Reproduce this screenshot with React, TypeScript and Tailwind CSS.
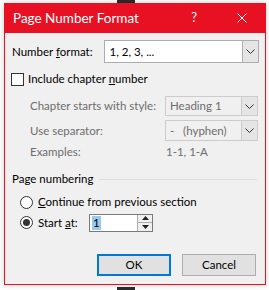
import React from 'react'

const font = { fontFamily: '"Segoe UI", Lato, "Noto Sans", sans-serif' }

function Chevron() {
  return (
    <svg width="9" height="5" viewBox="0 0 9 5" className="block">
      <path d="M0.5 0.5 L4.5 4.5 L8.5 0.5" fill="none" stroke="#333" strokeWidth="1" />
    </svg>
  )
}

function Select({ value, disabled, className }: { value: string; disabled?: boolean; className: string }) {
  return (
    <div
      className={
        'flex border ' +
        (disabled ? 'border-[#cccccc] bg-[#f0f0f0] text-[#6d6d6d] ' : 'border-[#adadad] bg-white text-black ') +
        className
      }
    >
      <div className="flex flex-1 items-center pl-[4px]">{value}</div>
      <div
        className={
          'flex w-[16px] items-center justify-center border-l ' +
          (disabled ? 'border-[#cccccc] bg-[#e5e5e5]' : 'border-[#adadad] bg-[#e5e5e5]')
        }
      >
        <Chevron />
      </div>
    </div>
  )
}

function Radio({ checked }: { checked?: boolean }) {
  return (
    <div className="flex h-[13px] w-[13px] items-center justify-center rounded-full border border-[#333] bg-white">
      {checked && <div className="h-[7px] w-[7px] rounded-full bg-[#333]" />}
    </div>
  )
}

export default function App() {
  return (
    <div className="flex h-[290px] w-[269px] flex-col bg-white text-[11.5px]" style={font}>
      <div className="ml-[117px] h-[3px] w-[18px] bg-[#2b2b2b]" />
      <div className="mx-[3px] ml-[4px] flex h-[282px] flex-col border border-t-0 border-[#e81123] bg-[#f0f0f0] shadow-[0_0_6px_rgba(0,0,0,0.2)]">
        {/* title bar */}
        <div className="-mx-px flex h-[30px] items-center bg-[#e81123] pl-[9px] text-white">
          <span className="text-[13.5px]">Page Number Format</span>
          <span className="ml-auto mr-[40px] text-[13px]">?</span>
          <svg width="10" height="10" viewBox="0 0 10 10" className="mr-[19px]">
            <path d="M0.5 0.5 L9.5 9.5 M9.5 0.5 L0.5 9.5" stroke="white" strokeWidth="1" />
          </svg>
        </div>

        <div className="flex flex-1 flex-col px-[6px]">
          {/* number format */}
          <div className="mt-[7px] flex h-[23px] items-center">
            <span className="w-[95px] pl-[1px]">
              Number <u>f</u>ormat:
            </span>
            <Select value="1, 2, 3, ..." className="h-[23px] w-[157px]" />
          </div>

          {/* include chapter */}
          <div className="mt-[9px] flex h-[14px] items-center">
            <div className="h-[13px] w-[13px] border border-[#333] bg-white" />
            <span className="ml-[4px]">
              Include chapter <u>n</u>umber
            </span>
          </div>

          <div className="mt-[10px] flex h-[20px] items-center text-[#6d6d6d]">
            <span className="w-[154px] pl-[19px]">Chapter starts with style:</span>
            <Select value="Heading 1" disabled className="h-[20px] w-[93px]" />
          </div>
          <div className="mt-[4px] flex h-[21px] items-center text-[#6d6d6d]">
            <span className="w-[154px] pl-[19px]">Use separator:</span>
            <Select value="-   (hyphen)" disabled className="h-[21px] w-[93px] whitespace-pre" />
          </div>
          <div className="mt-[3px] flex h-[16px] items-center text-[#6d6d6d]">
            <span className="w-[155px] pl-[19px]">Examples:</span>
            <span>1-1, 1-A</span>
          </div>

          {/* page numbering */}
          <div className="mt-[11px] flex h-[16px] items-center">
            <span className="pl-[1px]">Page numbering</span>
            <div className="ml-[6px] mr-[2px] h-px flex-1 bg-[#dcdcdc]" />
          </div>
          <div className="mt-[7px] flex h-[16px] items-center pl-[9px]">
            <Radio />
            <span className="ml-[5px]">
              <u>C</u>ontinue from previous section
            </span>
          </div>
          <div className="mt-[3px] flex h-[19px] items-center pl-[9px]">
            <Radio checked />
            <span className="ml-[5px] w-[51px]">
              Start <u>a</u>t:
            </span>
            <div className="flex h-[18px] w-[64px] border border-[#7a7a7a] bg-white">
              <div className="flex flex-1 items-center pl-[2px]">
                <span className="bg-[#99c9ef] px-px leading-[14px]">1</span>
              </div>
              <div className="flex w-[15px] flex-col border-l border-[#adadad]">
                <div className="flex flex-1 items-center justify-center border-b border-[#adadad] bg-[#f0f0f0]">
                  <svg width="7" height="4" viewBox="0 0 7 4">
                    <path d="M3.5 0 L7 4 L0 4 Z" fill="#222" />
                  </svg>
                </div>
                <div className="flex flex-1 items-center justify-center bg-[#f0f0f0]">
                  <svg width="7" height="4" viewBox="0 0 7 4">
                    <path d="M0 0 L7 0 L3.5 4 Z" fill="#222" />
                  </svg>
                </div>
              </div>
            </div>
          </div>

          {/* buttons */}
          <div className="mt-auto mb-[8px] flex justify-end gap-[11px] pr-[3px]">
            <div className="flex h-[22px] w-[74px] items-center justify-center border-2 border-[#0078d7] bg-[#e1e1e1]">
              OK
            </div>
            <div className="flex h-[22px] w-[74px] items-center justify-center border border-[#adadad] bg-[#e1e1e1]">
              Cancel
            </div>
          </div>
        </div>
      </div>
      <div className="ml-[117px] mt-[2px] h-[3px] w-[18px] bg-[#2b2b2b]" />
    </div>
  )
}
